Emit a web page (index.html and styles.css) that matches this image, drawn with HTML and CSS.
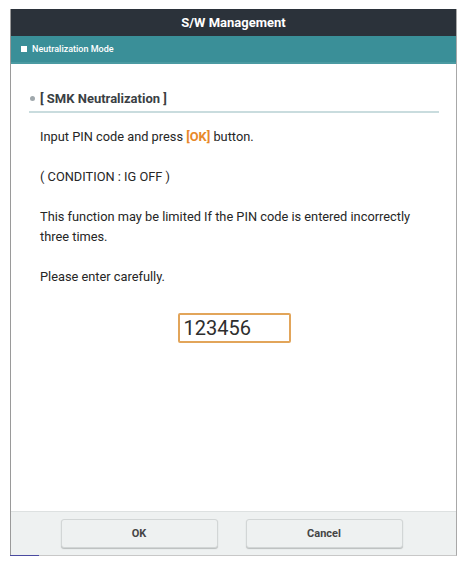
FILE: index.html
```html
<!DOCTYPE html>
<html>
<head>
<meta charset="utf-8">
<link rel="stylesheet" href="styles.css">
</head>
<body>
<div class="frame">
  <div class="titlebar">S/W Management</div>
  <div class="modebar"><span class="square"></span><span class="mode-text">Neutralization Mode</span></div>
  <div class="content">
    <div class="section-head"><span class="dot"></span><span class="section-title">[ SMK Neutralization ]</span></div>
    <p class="para">Input PIN code and press <span class="hl">[OK]</span> button.</p>
    <p class="para">( CONDITION : IG OFF )</p>
    <p class="para">This function may be limited If the PIN code is entered incorrectly three times.</p>
    <p class="para">Please enter carefully.</p>
    <div class="pin-wrap"><div class="pin">123456</div></div>
  </div>
  <div class="footer">
    <div class="btn">OK</div>
    <div class="btn">Cancel</div>
  </div>
</div>
</body>
</html>
```

FILE: styles.css
```css
html, body {
  margin: 0;
  padding: 0;
  background: #ffffff;
}
body {
  width: 468px;
  height: 566px;
  font-family: Roboto, "Liberation Sans", sans-serif;
}
.frame {
  position: relative;
  margin: 9px 0 0 10px;
  width: 447px;
  height: 547px;
  box-sizing: border-box;
  border-left: 1px solid #9a9a9a;
  border-right: 1px solid #a8a8a8;
  border-bottom: 1px solid #c8c8c8;
  display: flex;
  flex-direction: column;
}
.frame::after {
  content: "";
  position: absolute;
  left: -1px;
  bottom: -1px;
  width: 29px;
  height: 1px;
  background: #4a4aa0;
}
.titlebar {
  height: 27px;
  background: #2b323a;
  color: #ffffff;
  font-weight: 700;
  font-size: 13px;
  display: flex;
  align-items: center;
  justify-content: center;
}
.modebar {
  height: 28px;
  box-sizing: border-box;
  background: #3a8f98;
  border-bottom: 2px solid #4a9aa2;
  display: flex;
  align-items: center;
  padding-left: 10px;
  gap: 5px;
}
.square {
  width: 6px;
  height: 6px;
  background: #ffffff;
}
.mode-text {
  color: #ffffff;
  font-size: 9px;
  font-weight: 500;
}
.content {
  flex: 1;
  padding: 26px 17px 0 18px;
}
.section-head {
  display: flex;
  align-items: center;
  gap: 5px;
  height: 16px;
  padding: 0 0 5px 1px;
  border-bottom: 2px solid #c9dcde;
}
.dot {
  width: 5px;
  height: 5px;
  border-radius: 50%;
  background: #a0a8ac;
}
.section-title {
  font-size: 13px;
  font-weight: 700;
  color: #3a3f44;
}
.para {
  margin: 14px 0 0 11px;
  font-size: 12.8px;
  line-height: 20px;
  color: #262626;
  padding-right: 20px;
}
.para + .para {
  margin-top: 20px;
}
.hl {
  color: #e8892a;
  font-weight: 700;
}
.pin-wrap {
  display: flex;
  justify-content: center;
  margin-top: 26px;
}
.pin {
  width: 113px;
  height: 30px;
  box-sizing: border-box;
  border: 2px solid #e2a55a;
  border-radius: 2px;
  font-size: 20px;
  line-height: 26px;
  color: #2e2e2e;
  padding-left: 4px;
}
.footer {
  height: 44px;
  box-sizing: border-box;
  border-top: 1px solid #dde1e1;
  background: #eef1f1;
  display: flex;
  justify-content: center;
  align-items: flex-start;
  gap: 28px;
  padding-top: 7px;
  padding-right: 4px;
}
.btn {
  width: 157px;
  height: 29px;
  box-sizing: border-box;
  border: 1px solid #d2d6d6;
  border-radius: 3px;
  background: #eef1f1;
  box-shadow: 0 1px 1px #b9bdbd;
  display: flex;
  align-items: center;
  justify-content: center;
  font-size: 11px;
  font-weight: 700;
  color: #454545;
}
```
